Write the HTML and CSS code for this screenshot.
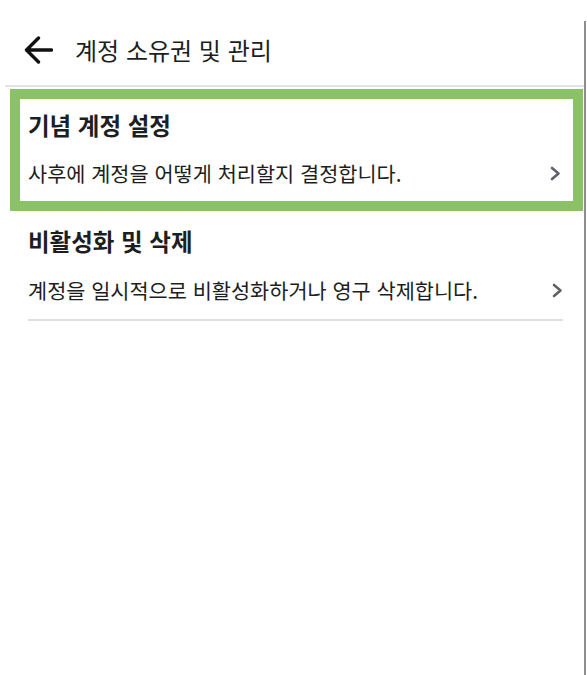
FILE: index.html
```html
<!DOCTYPE html>
<html lang="ko">
<head>
<meta charset="utf-8">
<title>계정 소유권 및 관리</title>
<link rel="stylesheet" href="styles.css">
</head>
<body>
<div class="screen">
  <header class="topbar">
    <svg class="back" width="29" height="28" viewBox="0 0 29 28" aria-hidden="true">
      <path d="M27.5 14 H3 M14.5 2 L2.5 14 L14.5 26" fill="none" stroke="#111" stroke-width="3.4" stroke-linecap="round" stroke-linejoin="round"/>
    </svg>
    <h1 class="page-title">계정 소유권 및 관리</h1>
  </header>
  <div class="sep"></div>
  <a class="item highlighted" href="#">
    <div class="item-title">기념 계정 설정</div>
    <div class="item-desc-row">
      <span class="item-desc">사후에 계정을 어떻게 처리할지 결정합니다.</span>
      <svg class="chev" width="11" height="15" viewBox="0 0 11 15" aria-hidden="true"><path d="M2 2 L8.5 7.5 L2 13" fill="none" stroke="#5f6368" stroke-width="2.6" stroke-linecap="round" stroke-linejoin="round"/></svg>
    </div>
  </a>
  <a class="item plain" href="#">
    <div class="item-title">비활성화 및 삭제</div>
    <div class="item-desc-row">
      <span class="item-desc">계정을 일시적으로 비활성화하거나 영구 삭제합니다.</span>
      <svg class="chev" width="11" height="15" viewBox="0 0 11 15" aria-hidden="true"><path d="M2 2 L8.5 7.5 L2 13" fill="none" stroke="#5f6368" stroke-width="2.6" stroke-linecap="round" stroke-linejoin="round"/></svg>
    </div>
  </a>
</div>
</body>
</html>
```

FILE: styles.css
```css
html, body {
  margin: 0;
  padding: 0;
  background: #ffffff;
}
body {
  font-family: "Noto Sans CJK KR", "Noto Sans", sans-serif;
  color: #1c1e21;
}
.screen {
  margin-top: 21px;
  width: 584px;
  height: 654px;
  border-right: 2px solid #8e8e8e;
}
.topbar {
  height: 64px;
  box-sizing: border-box;
  padding: 0 0 6px 24px;
  display: flex;
  align-items: center;
}
.back {
  display: block;
  flex: none;
}
.page-title {
  margin: 0 0 0 22px;
  font-size: 24px;
  font-weight: 400;
  line-height: 30px;
  color: #1c1e21;
}
.sep {
  margin-left: 5px;
  height: 2px;
  background: #e3e3e3;
}
.item {
  display: block;
  text-decoration: none;
  color: inherit;
}
.highlighted {
  margin: 2px 1px 0 10px;
  border: 10px solid #8cc266;
  padding: 12px 12px 15px 8px;
}
.plain {
  margin: 0 21px 0 28px;
  padding: 16px 0 16px 0;
  border-bottom: 2px solid #e0e0e0;
}
.item-title {
  font-size: 23.5px;
  font-weight: 700;
  line-height: 28px;
}
.item-desc-row {
  margin-top: 21px;
  display: flex;
  align-items: center;
  justify-content: space-between;
  height: 26px;
}
.plain .item-desc-row {
  margin-top: 22px;
}
.item-desc {
  font-size: 20.8px;
  line-height: 26px;
}
.chev {
  display: block;
  flex: none;
}
```
